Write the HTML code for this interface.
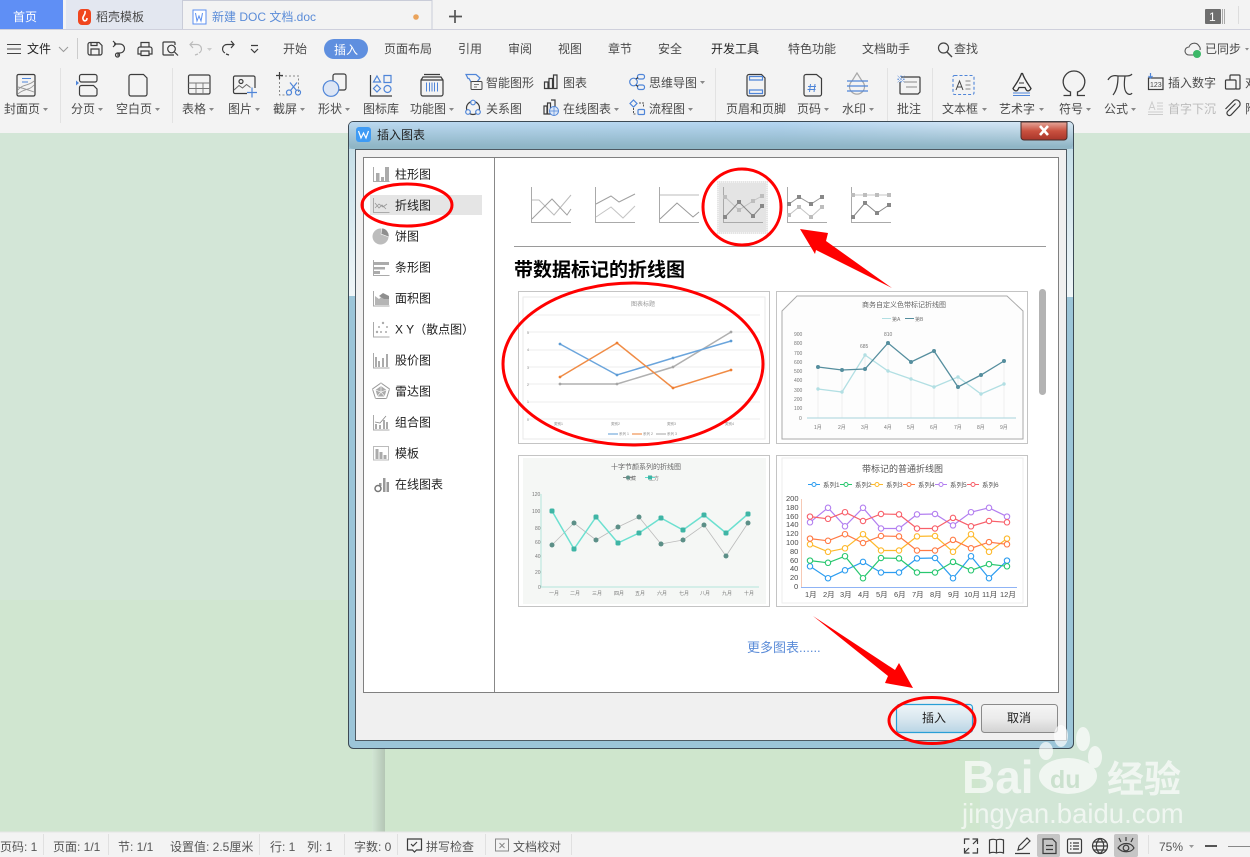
<!DOCTYPE html>
<html lang="zh-CN">
<head>
<meta charset="utf-8">
<title>插入图表</title>
<style>
html,body{margin:0;padding:0;width:1250px;height:857px;overflow:hidden;background:#f3f3f3}
svg{display:block;position:absolute;left:0;top:0}
text{font-family:"Liberation Sans","Noto Sans CJK SC",sans-serif;font-size:12px;fill:#4a4a4a}
.k{fill:#222}
.i{fill:none;stroke:#3c3c3c;stroke-width:1.2}
.b{fill:none;stroke:#4f85d8;stroke-width:1.2}
.g{fill:none;stroke:#aaa;stroke-width:1}
.c{fill:#888}
.s{fill:#555}
.t{font-size:3.5px;fill:#888}
.t2{font-size:5px;fill:#777}
.t3{font-size:6.5px;fill:#555}
</style>
</head>
<body>
<svg width="1250" height="857" viewBox="0 0 1250 857" xmlns="http://www.w3.org/2000/svg">
<defs>
<linearGradient id="tb" x1="0" y1="0" x2="1" y2="0"><stop offset="0" stop-color="#bcd9f0"/><stop offset=".6" stop-color="#b5d6f2"/><stop offset=".85" stop-color="#d0e4f6"/><stop offset="1" stop-color="#d8e8f5"/></linearGradient>
<linearGradient id="tb2" x1="0" y1="0" x2="0" y2="1"><stop offset="0" stop-color="#8db4c4" stop-opacity="0"/><stop offset=".9" stop-color="#8db4c4" stop-opacity=".95"/></linearGradient>
<linearGradient id="cl" x1="0" y1="0" x2="0" y2="1"><stop offset="0" stop-color="#e6a89c"/><stop offset=".5" stop-color="#c9513f"/><stop offset="1" stop-color="#a8352a"/></linearGradient>
<linearGradient id="ok" x1="0" y1="0" x2="0" y2="1"><stop offset="0" stop-color="#eef5f9"/><stop offset=".5" stop-color="#d9e7ef"/><stop offset="1" stop-color="#b9d5e5"/></linearGradient>
<linearGradient id="no" x1="0" y1="0" x2="0" y2="1"><stop offset="0" stop-color="#f5f5f5"/><stop offset=".5" stop-color="#ebebeb"/><stop offset="1" stop-color="#d2d2d2"/></linearGradient>
<linearGradient id="sh" x1="0" y1="0" x2="1" y2="0"><stop offset="0" stop-color="#d2e6d4"/><stop offset="1" stop-color="#b4c6b5"/></linearGradient>
<linearGradient id="fr" x1="0" y1="0" x2="0" y2="1"><stop offset="0" stop-color="#c6dfe8"/><stop offset="1" stop-color="#f0f6f8"/></linearGradient>
<marker id="m1" markerUnits="userSpaceOnUse" markerWidth="8" markerHeight="8" refX="4" refY="4"><circle cx="4" cy="4" r="2.7" fill="#fff" stroke="#2d9df0" stroke-width="1.100"/></marker>
<marker id="m2" markerUnits="userSpaceOnUse" markerWidth="8" markerHeight="8" refX="4" refY="4"><circle cx="4" cy="4" r="2.7" fill="#fff" stroke="#28c76f" stroke-width="1.100"/></marker>
<marker id="m3" markerUnits="userSpaceOnUse" markerWidth="8" markerHeight="8" refX="4" refY="4"><circle cx="4" cy="4" r="2.7" fill="#fff" stroke="#fdb92c" stroke-width="1.100"/></marker>
<marker id="m4" markerUnits="userSpaceOnUse" markerWidth="8" markerHeight="8" refX="4" refY="4"><circle cx="4" cy="4" r="2.7" fill="#fff" stroke="#ff7a45" stroke-width="1.100"/></marker>
<marker id="m5" markerUnits="userSpaceOnUse" markerWidth="8" markerHeight="8" refX="4" refY="4"><circle cx="4" cy="4" r="2.7" fill="#fff" stroke="#b37ff0" stroke-width="1.100"/></marker>
<marker id="m6" markerUnits="userSpaceOnUse" markerWidth="8" markerHeight="8" refX="4" refY="4"><circle cx="4" cy="4" r="2.7" fill="#fff" stroke="#f8606a" stroke-width="1.100"/></marker>
<marker id="d1" markerUnits="userSpaceOnUse" markerWidth="4" markerHeight="4" refX="2" refY="2"><circle cx="2" cy="2" r="1.4" fill="#5b9bd5"/></marker>
<marker id="d2" markerUnits="userSpaceOnUse" markerWidth="4" markerHeight="4" refX="2" refY="2"><circle cx="2" cy="2" r="1.4" fill="#ed7d31"/></marker>
<marker id="d3" markerUnits="userSpaceOnUse" markerWidth="4" markerHeight="4" refX="2" refY="2"><circle cx="2" cy="2" r="1.4" fill="#a5a5a5"/></marker>
<marker id="e1" markerUnits="userSpaceOnUse" markerWidth="6" markerHeight="6" refX="3" refY="3"><circle cx="3" cy="3" r="2" fill="#558e9e"/></marker>
<marker id="e2" markerUnits="userSpaceOnUse" markerWidth="6" markerHeight="6" refX="3" refY="3"><circle cx="3" cy="3" r="1.7" fill="#b2dfe3"/></marker>
<marker id="f1" markerUnits="userSpaceOnUse" markerWidth="8" markerHeight="8" refX="4" refY="4"><rect x="1.500" y="1.500" width="5" height="5" rx="1.600" fill="#3fb5a5"/></marker>
<marker id="f2" markerUnits="userSpaceOnUse" markerWidth="8" markerHeight="8" refX="4" refY="4"><circle cx="4" cy="4" r="2.5" fill="#5c8f87"/></marker>
<marker id="q1" markerUnits="userSpaceOnUse" markerWidth="6" markerHeight="6" refX="3" refY="3"><rect x="1" y="1" width="4" height="4" fill="#888"/></marker>
<marker id="q2" markerUnits="userSpaceOnUse" markerWidth="6" markerHeight="6" refX="3" refY="3"><rect x="1" y="1" width="4" height="4" fill="#bdbdbd"/></marker>
</defs>

<!-- document background -->
<rect x="0" y="133" width="1250" height="699" fill="#d3e6d7"/>
<rect x="0" y="600" width="385" height="232" fill="#d0e6d0"/>
<rect x="372" y="133" width="13" height="699" fill="url(#sh)"/>
<rect x="385" y="133" width="595" height="699" fill="#cfe6cd"/>
<rect x="980" y="133" width="270" height="699" fill="#d2e6d6"/>

<!-- top bars -->
<rect x="0" y="0" width="1250" height="133" fill="#f3f3f3"/>
<rect x="0" y="29" width="1250" height="1" fill="#cfd0dc"/>
<rect x="0" y="0" width="63" height="29" fill="#5f8ff5"/>
<rect x="66" y="0" width="116" height="29" fill="#e3e7f0"/>
<path d="M182.500 29V.5H432V29" fill="#f3f3f3" stroke="#c9ccd8"/>
<text x="13" y="21" style="fill:#fff">首页</text>
<rect x="78" y="9" width="13" height="16" rx="4" fill="#f0461f"/>
<path d="M85 11c1 4-3 5-2 8s4 2 4-1" fill="none" stroke="#fff" stroke-width="1.600"/>
<text x="96" y="21">稻壳模板</text>
<rect x="193" y="10" width="13" height="14" fill="#fff" stroke="#5b8ff0"/>
<path d="M195.500 13l1.500 8 2-5 2 5 1.500-8" fill="none" stroke="#5b8ff0"/>
<text x="212" y="21" style="fill:#5b8cd8">新建 DOC 文档.doc</text>
<circle cx="416" cy="17" r="2.800" fill="#eaa35b"/>
<path d="M455 10v13M449 16.500h13" stroke="#555" stroke-width="1.700"/>
<rect x="1205" y="9" width="16" height="15" rx="1" fill="#6e6e6e"/>
<text x="1209" y="21" style="fill:#fff">1</text>
<path d="M1222.500 9v15M1224.500 9v15" stroke="#aaa"/>
<path d="M1238.500 6v18" stroke="#ddd"/>

<!-- menu row -->
<path d="M7 44.500h14M7 49h14M7 53.500h14" stroke="#444"/>
<text x="27" y="53" class="k">文件</text>
<path d="M59 47l4.500 4.500L68 47" fill="none" stroke="#999"/>
<path d="M77.500 38v21" stroke="#ccc"/>
<path class="i" d="M90 42.500h9l3 3V53a2 2 0 0 1-2 2H90a2 2 0 0 1-2-2v-8.500a2 2 0 0 1 2-2zM91 55v-6h8v6M91 42.500v3h6v-3"/>
<path class="i" d="M114 44h6a4.500 4.500 0 0 1 0 9h-2v3M113 47l3-3-3-3"/><circle cx="117.500" cy="55" r="2" class="i"/>
<path class="i" d="M141 47v-4.500h8V47M140 47h10a2 2 0 0 1 2 2v5h-3M141 54h-3v-5a2 2 0 0 1 2-2M141 51h8v4.500h-8z"/>
<path class="i" d="M174 55h-10a1 1 0 0 1-1-1V43a1 1 0 0 1 1-1h10a1 1 0 0 1 1 1v2"/><circle cx="171.500" cy="49" r="3.800" class="i"/><path class="i" d="M174.500 52l3.500 3.500"/>
<path d="M193 48l-3-3.500 3-3M190 44.500h7a4.500 4.500 0 0 1 2 8.500M198 54l-3 1" fill="none" stroke="#bbb" stroke-width="1.200"/>
<path d="M207 48l2.500 3 2.500-3z" fill="#ccc"/>
<path class="i" d="M231 41l3 3.500-3 3.500M234 44.500h-7a4.500 4.500 0 0 0-2 8.500M226 54l3 1"/>
<path class="i" d="M251 45.500h7M251 49l3.500 3.500 3.500-3.500"/>
<text x="283" y="53">开始</text>
<rect x="324" y="39" width="44" height="20" rx="10" fill="#5f8fdf"/>
<text x="334" y="54" style="fill:#fff">插入</text>
<text x="384" y="53">页面布局</text>
<text x="458" y="53">引用</text>
<text x="508" y="53">审阅</text>
<text x="558" y="53">视图</text>
<text x="608" y="53">章节</text>
<text x="658" y="53">安全</text>
<text x="711" y="53" class="k">开发工具</text>
<text x="788" y="53">特色功能</text>
<text x="862" y="53">文档助手</text>
<circle cx="943.500" cy="48" r="5" fill="none" stroke="#444" stroke-width="1.200"/>
<path d="M947 52l5 5" stroke="#444" stroke-width="1.400"/>
<text x="954" y="53">查找</text>
<path d="M1195 55h-6a4 4 0 0 1 0-8 5.500 5.500 0 0 1 10-1 4 4 0 0 1 1 4" fill="none" stroke="#555" stroke-width="1.100"/>
<circle cx="1197" cy="54" r="4" fill="#3cb868"/>
<text x="1205" y="53">已同步</text>
<path d="M1245 48l2 2.500 2-2.500" fill="#888"/>

<!-- ribbon separators -->
<path d="M60.500 68v55M172.500 68v55M715.500 68v55M887.500 68v55M932.500 68v55" stroke="#e2e2e2"/>

<!-- ribbon labels -->
<text x="4" y="113">封面页</text><path d="M43 108l2.500 3 2.500-3z" class="c"/>
<text x="71" y="113">分页</text><path d="M98 108l2.500 3 2.500-3z" class="c"/>
<text x="116" y="113">空白页</text><path d="M155 108l2.500 3 2.500-3z" class="c"/>
<text x="182" y="113">表格</text><path d="M209 108l2.500 3 2.500-3z" class="c"/>
<text x="228" y="113">图片</text><path d="M255 108l2.500 3 2.500-3z" class="c"/>
<text x="273" y="113">截屏</text><path d="M300 108l2.500 3 2.500-3z" class="c"/>
<text x="318" y="113">形状</text><path d="M345 108l2.500 3 2.500-3z" class="c"/>
<text x="363" y="113">图标库</text>
<text x="410" y="113">功能图</text><path d="M449 108l2.500 3 2.500-3z" class="c"/>
<text x="486" y="87">智能图形</text>
<text x="486" y="113">关系图</text>
<text x="563" y="87">图表</text>
<text x="563" y="113">在线图表</text><path d="M614 108l2.500 3 2.500-3z" class="c"/>
<text x="649" y="87">思维导图</text><path d="M700 81l2.500 3 2.500-3z" class="c"/>
<text x="649" y="113">流程图</text><path d="M688 108l2.500 3 2.500-3z" class="c"/>
<text x="726" y="113">页眉和页脚</text>
<text x="797" y="113">页码</text><path d="M824 108l2.500 3 2.500-3z" class="c"/>
<text x="842" y="113">水印</text><path d="M869 108l2.500 3 2.500-3z" class="c"/>
<text x="897" y="113">批注</text>
<text x="942" y="113">文本框</text><path d="M982 108l2.500 3 2.500-3z" class="c"/>
<text x="999" y="113">艺术字</text><path d="M1039 108l2.500 3 2.500-3z" class="c"/>
<text x="1059" y="113">符号</text><path d="M1086 108l2.500 3 2.500-3z" class="c"/>
<text x="1104" y="113">公式</text><path d="M1131 108l2.500 3 2.500-3z" class="c"/>
<text x="1168" y="87">插入数字</text>
<text x="1168" y="113" style="fill:#bbb">首字下沉</text>
<text x="1245" y="87">对象</text>
<text x="1245" y="113">附件</text>

<!-- ribbon icons -->
<rect x="17" y="74.500" width="18" height="21.500" rx="1.500" class="i"/><path d="M22 78.500h9M22 82h6" stroke="#4f85d8" stroke-width="1.100"/><path d="M18 90c4-6 11-4 16-9M18 94c6-6 11-3 16-9M18 87c5 1 10 3 16 5" fill="none" stroke="#999" stroke-width=".9"/>
<rect x="79.500" y="74.500" width="17.500" height="7.500" rx="2" class="i"/><path class="i" d="M81.500 85.500h12l3.500 3.500v5a2 2 0 0 1-2 2H81.500a2 2 0 0 1-2-2v-6.500a2 2 0 0 1 2-2z"/><path d="M76 80.500l3 2.500-3 2.500z" fill="#4f85d8"/>
<path class="i" d="M131 74.500h12.500l3.500 3.500v16a2 2 0 0 1-2 2h-14a2 2 0 0 1-2-2V76.500a2 2 0 0 1 2-2z"/>
<rect x="188.500" y="75" width="21.500" height="19" rx="1.500" class="i"/><path d="M188.500 83h21.500M188.500 88.500h21.500M196 83v11M203 83v11" stroke="#777" stroke-width=".9"/>
<rect x="233.500" y="76" width="21.500" height="17.500" rx="1.500" class="i"/><circle cx="241" cy="81.500" r="2" class="i"/><path d="M234 90l5-4.500 3.500 2.500 4-3.500 4 3" fill="none" stroke="#666" stroke-width="1"/><rect x="247" y="88" width="10" height="9" fill="#f3f3f3"/><path class="b" d="M252 87.500v10M247 92.500h10"/>
<path d="M281 76h17.500v16M279.500 78v17h9" fill="none" stroke="#888" stroke-dasharray="2 2"/><path class="i" d="M276 75.500h7M279.500 72v7"/><circle cx="289" cy="92.500" r="2.500" class="b"/><circle cx="298" cy="92.500" r="2.500" class="b"/><path class="b" d="M290.500 90.500l6.500-8M296.500 90.500l-6.500-8"/>
<path class="i" d="M333 88V76a2 2 0 0 1 2-2h9a2 2 0 0 1 2 2v12a2 2 0 0 1-2 2h-5"/><circle cx="331" cy="88.500" r="7.800" fill="#dde6f5" stroke="#4f85d8" stroke-width="1.200"/>
<path class="i" d="M370.500 75v21h21.500"/><path class="b" d="M377 76l3.500 6h-7zM384 75.500h7v7h-7zM377 85l3.500 3.500-3.500 3.500-3.500-3.500z"/><circle cx="387.500" cy="89" r="3.500" class="b"/>
<path class="i" d="M421 94V80l2-3h18l2 3v14a2 2 0 0 1-2 2h-18a2 2 0 0 1-2-2zM421 80h22M424 74.500h16"/><path d="M426.500 82.500v9M429.500 82.500v9M432 82.500v9M434.500 82.500v9M437.500 82.500v9" stroke="#4f85d8"/>
<path class="b" d="M466 74.500h10l4 3.500-3 4h-6l-2-3.500h-1z"/><rect x="471" y="81.500" width="11" height="8" rx="1" fill="#f3f3f3" stroke="#444"/><path d="M474 84.500h5M474 87h3" stroke="#777"/>
<circle cx="473" cy="108" r="6.500" class="i"/><circle cx="473" cy="102.500" r="2.300" fill="#f3f3f3" stroke="#4f85d8" stroke-width="1.200"/><circle cx="468" cy="112" r="2.300" fill="#f3f3f3" stroke="#4f85d8" stroke-width="1.200"/><circle cx="478" cy="112" r="2.300" fill="#f3f3f3" stroke="#4f85d8" stroke-width="1.200"/>
<path class="i" d="M544.500 82h3.500v6.500h-3.500zM549 78.500h3.500v10H549zM553.500 75h3.500v13.500h-3.500z"/>
<path class="i" d="M544 106h3v8h-3zM547.500 103h3v11h-3zM551 100h4v9"/><circle cx="554" cy="111" r="4.500" fill="#dbe6f7" stroke="#4f85d8"/><path d="M549.500 111h9M554 106.500v9" stroke="#4f85d8" stroke-width=".7"/>
<circle cx="633.500" cy="82" r="3.800" class="b"/><rect x="637.500" y="74.500" width="7" height="4.500" rx="2" class="b"/><rect x="637.500" y="85" width="7" height="4.500" rx="2" class="b"/><path class="i" d="M636 79l2-1.500M636 85l2 1.500" stroke-width="1"/>
<path class="b" d="M633.500 100l3.500 3.500-3.500 3.500-3.500-3.500z"/><rect x="638" y="109.500" width="6.500" height="5" rx="1" class="b"/><path d="M639 103h4.500v4.500M633.500 108v6h3" fill="none" stroke="#555" stroke-dasharray="2 1"/>
<path class="i" d="M749 74.500h12.500l3.500 3.500v16a2 2 0 0 1-2 2h-14a2 2 0 0 1-2-2V76.500a2 2 0 0 1 2-2z"/><path class="b" d="M749.500 76.500h13v3.500h-13zM749.500 90h13v3.500h-13z"/>
<path class="i" d="M806 74.500h10.500l5 4v15.500a2 2 0 0 1-2 2H806a2 2 0 0 1-2-2V76.500a2 2 0 0 1 2-2z"/><path d="M810.500 84l-1 8M815 84l-1 8M808 86.500h8M807.500 89.500h8" stroke="#4f85d8" fill="none"/>
<path d="M857 73l-5 8a7.500 7.500 0 1 0 10 0z" fill="none" stroke="#a8a8a8" stroke-width="1.200"/><path d="M847 81h21M847 86h21M847 91h21" stroke="#4f85d8" stroke-width="1.200"/>
<path class="i" d="M901 77h18a1 1 0 0 1 1 1v14l-2 2h-17a1 1 0 0 1-1-1V82"/><path d="M904 82h13M906 87h11" stroke="#888"/><text x="896" y="83" style="fill:#4f85d8;font-size:10px">※</text>
<rect x="953" y="75.500" width="21" height="19" rx="1.500" fill="none" stroke="#4f85d8" stroke-dasharray="3 2" stroke-width="1.100"/><path d="M956 90l3.500-9 3.500 9M957.500 87h4" fill="none" stroke="#444"/><path d="M965.500 81h5M965.500 85h5M965.500 89h5" stroke="#888"/>
<path d="M1021.500 73.500c-2 6-6 11-8.500 15 1.500 3 4 3 5 1l1-2h6l1 2c1 2 3.500 2 5-1-2.500-4-6.500-9-8.500-15z" fill="none" stroke="#333" stroke-width="1.300"/><path d="M1019 83h5" stroke="#333"/><path d="M1013 93h17M1013 95.500h17" stroke="#4f85d8"/>
<path d="M1063.500 95.500h7v-3.500a10.800 10.800 0 1 1 7 0v3.500h7.500" fill="none" stroke="#3c3c3c" stroke-width="1.300"/>
<path d="M1108 80c2-4 6-5 10-4h8c3 0 5-.5 6-2M1118 76c0 8-1 14-5 19M1125 76c-1 7-1 13 1 16 2 3 5 3 6 1" fill="none" stroke="#3c3c3c" stroke-width="1.200"/>
<rect x="1148.500" y="78" width="14.500" height="11.500" class="i" stroke-width="1"/><text x="1150" y="87" style="font-size:7px">123</text><path class="b" d="M1150.500 73v5M1148.500 76l2 2 2-2" stroke-width="1"/>
<path d="M1149 110l3-8 3 8M1150 107.500h4M1157 103h6M1157 106h6M1157 109h6M1148 112h15M1148 114.500h15" fill="none" stroke="#ccc"/>
<path class="i" d="M1230 80v-4a1 1 0 0 1 1-1h8a1 1 0 0 1 1 1v12a1 1 0 0 1-1 1h-3"/><rect x="1225.500" y="80" width="10.500" height="9" rx="1" class="i"/>
<path class="i" d="M1235 105l-8 8a2.500 2.500 0 0 0 3.500 3.500l8.500-9a4 4 0 0 0-5.500-5.500l-8.500 8.500" transform="translate(.5 -1.500)"/>

<!-- dialog -->
<rect x="348.500" y="121.500" width="725" height="627" rx="5" fill="#9cc5d8" stroke="#3c4a55"/>
<rect x="349" y="149" width="6.500" height="147" fill="url(#fr)"/>
<rect x="1067" y="149" width="6" height="148" fill="url(#fr)"/>
<rect x="349" y="122" width="724" height="27" rx="4" fill="url(#tb)"/>
<rect x="349" y="122" width="724" height="27" rx="4" fill="url(#tb2)"/>
<rect x="355.500" y="149.500" width="711" height="591" fill="#f0f0f0" stroke="#4e5a63"/>
<rect x="356" y="127" width="15" height="15" rx="3" fill="#3e9bf5"/>
<path d="M358.500 131l2.500 7 2.500-5 2.500 5 2.500-7" fill="none" stroke="#fff" stroke-width="1.200"/>
<text x="377" y="139" class="k">插入图表</text>
<path d="M1021 122h46v15a3 3 0 0 1-3 3h-40a3 3 0 0 1-3-3z" fill="url(#cl)" stroke="#4a2f2c"/>
<path d="M1040 126l8 9M1048 126l-8 9" stroke="#fff" stroke-width="2.600"/>

<rect x="363.500" y="157.500" width="695" height="535" fill="#fff" stroke="#808080"/>
<path d="M494.500 158v534" stroke="#888"/>
<rect x="370" y="195" width="112" height="20" fill="#e5e5e5"/>

<!-- side icons & text -->
<text x="395" y="178.500" class="k">柱形图</text>
<text x="395" y="209.500" class="k">折线图</text>
<text x="395" y="240.500" class="k">饼图</text>
<text x="395" y="271.500" class="k">条形图</text>
<text x="395" y="302.500" class="k">面积图</text>
<text x="395" y="333.500" class="k">X Y（散点图）</text>
<text x="395" y="364.500" class="k">股价图</text>
<text x="395" y="395.500" class="k">雷达图</text>
<text x="395" y="426.500" class="k">组合图</text>
<text x="395" y="457.500" class="k">模板</text>
<text x="395" y="488.500" class="k">在线图表</text>
<g fill="#ababab">
<path d="M373.500 167v14.500h16" class="g"/><path d="M376 173h3.500v8H376zM381 177h3v4h-3zM385 167h4v14h-4z"/>
<path d="M373.500 198v14.500h16" class="g"/><path d="M375 203l4 5 3-3 4 4M375 208l4-4 4 3 4-3" fill="none" stroke="#999" stroke-width=".8"/>
<circle cx="380.500" cy="236.500" r="8" fill="#bcbcbc"/><path d="M382 228a8 8 0 0 1 7 9l-8-3z" fill="#8f8f8f" stroke="#fff" stroke-width=".6"/>
<path d="M373.500 260v15.500h16" class="g"/><path d="M374 262h15v3h-15zM374 267h11v2.500h-11zM374 271h6v3h-6z"/>
<path d="M373.500 291v15h16" class="g"/><path d="M375 305v-9l4 3 4-4 6 3v7z" fill="#b5b5b5"/><path d="M379 296l4-3 6 3v3h-5z" fill="#8f8f8f"/>
<path d="M373.500 322v15h16" class="g"/><circle cx="377" cy="332" r="1.200"/><circle cx="383" cy="323" r="1.200"/><circle cx="379" cy="327" r="1"/><circle cx="387" cy="327" r="1"/><circle cx="381" cy="332" r="1"/><circle cx="386" cy="332" r="1"/>
<path d="M373.500 353v15h16" class="g"/><path d="M375 357h2v10h-2zM378 361h2v6h-2zM382 358h2v9h-2zM386 354h2v13h-2z"/>
<path d="M381 383l8.500 6-3 9.500h-11l-3-9.500z" fill="none" stroke="#999"/><path d="M381 386l5.500 4-2 6.500h-7l-2-6.500z"/><path d="M381 383v9M372.500 389l8.500 3 8.500-3M375.500 398.500l5.500-6.500 5.500 6.500" stroke="#fff" stroke-width=".6" fill="none"/>
<path d="M373.500 415v15h16" class="g"/><path d="M375 424h2v5h-2zM379 425h2v4h-2zM383 420h2v9h-2zM386 422h2v7h-2z"/><path d="M375 422l5 1 6-7" fill="none" stroke="#888" stroke-width=".8"/>
<rect x="373.500" y="446.500" width="15" height="13.500" fill="none" stroke="#bbb"/><path d="M375.500 449h3v10h-3zM379.500 452h3v7h-3zM383.500 455h3v4h-3z"/>
</g>
<path d="M379 486v-3h2.500v3zM383 478h2.500v14H383zM386.500 482h2.500v10h-2.500z" fill="#999"/><circle cx="378" cy="488.500" r="3" fill="none" stroke="#777" stroke-width="1.500"/>

<!-- thumbnails -->
<rect x="717" y="181" width="51" height="53" fill="#e4e4e4"/>
<rect x="718" y="182" width="49" height="51" fill="none" stroke="#fff" stroke-dasharray="1 1"/>
<g fill="none" stroke-width="1">
<path d="M531.500 187v35.500H571M595.500 187v35.500H635M659.500 187v35.500H699M723.500 187v35.500H763M787.500 187v35.500H827M851.500 187v35.500H891" stroke="#aaa"/>
<path d="M532 200h7l15 15 17-20" stroke="#bbb"/><path d="M532 219l20-20 15 16 4-6" stroke="#a0a0a0"/>
<path d="M596 204l15-8 8 6 16-8" stroke="#a0a0a0"/><path d="M596 217l15-10 12 11 12-12" stroke="#c4c4c4"/>
<path d="M660 195h39" stroke="#bbb"/><path d="M660 219l17-16 16 14 6-5" stroke="#999"/>
<polyline points="725,197 739,210 753,201 762,196" stroke="#c2c2c2" marker-start="url(#q2)" marker-mid="url(#q2)" marker-end="url(#q2)"/>
<polyline points="725,217 739,202 753,216 762,206" stroke="#888" marker-start="url(#q1)" marker-mid="url(#q1)" marker-end="url(#q1)"/>
<polyline points="789,204 799,197 811,204 822,197" stroke="#999" marker-start="url(#q1)" marker-mid="url(#q1)" marker-end="url(#q1)"/>
<polyline points="789,215 799,207 811,217 822,207" stroke="#c4c4c4" marker-start="url(#q2)" marker-mid="url(#q2)" marker-end="url(#q2)"/>
<polyline points="853,195 865,195 877,195 889,195" stroke="#c4c4c4" marker-start="url(#q2)" marker-mid="url(#q2)" marker-end="url(#q2)"/>
<polyline points="853,217 865,203 877,213 889,205" stroke="#888" marker-start="url(#q1)" marker-mid="url(#q1)" marker-end="url(#q1)"/>
</g>
<path d="M514 246.500h532" stroke="#9a9a9a"/>
<text x="514" y="276" style="font-size:19px;font-weight:bold;fill:#000">带数据标记的折线图</text>
<rect x="1039" y="289" width="7" height="106" rx="3.500" fill="#b3b3b3"/>

<!-- chart 1 -->
<rect x="518.500" y="291.500" width="251" height="152" fill="#fff" stroke="#c4c4c4"/>
<rect x="523" y="297" width="242" height="142" fill="#fff" stroke="#eaeaea"/>
<path d="M527 315h233M527 332h233M527 350h233M527 367h233M527 384h233M527 402h233M527 419h233" stroke="#ececec"/>
<text x="631" y="306" style="font-size:6px;fill:#999">图表标题</text>
<g class="t"><text x="527" y="334" class="t">5</text><text x="527" y="351" class="t">4</text><text x="527" y="369" class="t">3</text><text x="527" y="386" class="t">2</text><text x="527" y="403" class="t">1</text><text x="527" y="421" class="t">0</text>
<text x="554" y="425" class="t">类别1</text><text x="611" y="425" class="t">类别2</text><text x="667" y="425" class="t">类别3</text><text x="725" y="425" class="t">类别4</text>
<text x="619" y="435" class="t">系列 1</text><text x="643" y="435" class="t">系列 2</text><text x="667" y="435" class="t">系列 3</text></g>
<path d="M608 434h10" stroke="#5b9bd5"/><path d="M632 434h10" stroke="#ed7d31"/><path d="M656 434h10" stroke="#a5a5a5"/>
<g fill="none" stroke-width="1.500">
<polyline points="560,384 617,384 673,367 731,332" stroke="#b0b0b0" marker-start="url(#d3)" marker-mid="url(#d3)" marker-end="url(#d3)"/>
<polyline points="560,344 617,375 673,358 731,341" stroke="#6ba5dc" marker-start="url(#d1)" marker-mid="url(#d1)" marker-end="url(#d1)"/>
<polyline points="560,377 617,343 673,388 731,370" stroke="#f08c46" marker-start="url(#d2)" marker-mid="url(#d2)" marker-end="url(#d2)"/>
</g>

<!-- chart 2 -->
<rect x="776.500" y="291.500" width="251" height="152" fill="#fff" stroke="#c4c4c4"/>
<path d="M782 311l15-15h210l16 15v128H782z" fill="#fdfdfd" stroke="#aaa"/>
<text x="862" y="307" style="font-size:7px;fill:#666">商务自定义色带标记折线图</text>
<path d="M882 318.500h9" stroke="#b2dfe3"/><text x="892" y="321" class="t2">第A</text><path d="M905 318.500h9" stroke="#558e9e"/><text x="915" y="321" class="t2">第B</text>
<g class="t2">
<text x="794" y="336" class="t2">900</text><text x="794" y="345" class="t2">800</text><text x="794" y="355" class="t2">700</text><text x="794" y="364" class="t2">600</text><text x="794" y="373" class="t2">500</text><text x="794" y="382" class="t2">400</text><text x="794" y="392" class="t2">300</text><text x="794" y="401" class="t2">200</text><text x="794" y="410" class="t2">100</text><text x="799" y="420" class="t2">0</text>
<text x="814" y="429" class="t2">1月</text><text x="838" y="429" class="t2">2月</text><text x="861" y="429" class="t2">3月</text><text x="884" y="429" class="t2">4月</text><text x="907" y="429" class="t2">5月</text><text x="930" y="429" class="t2">6月</text><text x="954" y="429" class="t2">7月</text><text x="977" y="429" class="t2">8月</text><text x="1000" y="429" class="t2">9月</text>
<text x="860" y="348" class="t2">685</text><text x="884" y="336" class="t2">810</text>
</g>
<path d="M818 367v51M842 370v48M865 355v63M888 343v75M911 362v56M934 351v67M958 377v41M981 375v43M1004 361v57" stroke="#eee"/>
<path d="M807 418h209" stroke="#b8dbe3" stroke-width="1.200"/>
<g fill="none" stroke-width="1.300">
<polyline points="818,389 842,392 865,355 888,371 911,379 934,387 958,377 981,394 1004,384" stroke="#b2dfe3" marker-start="url(#e2)" marker-mid="url(#e2)" marker-end="url(#e2)"/>
<polyline points="818,367 842,370 865,369 888,343 911,362 934,351 958,387 981,375 1004,361" stroke="#558e9e" marker-start="url(#e1)" marker-mid="url(#e1)" marker-end="url(#e1)"/>
</g>

<!-- chart 3 -->
<rect x="518.500" y="455.500" width="251" height="151" fill="#fff" stroke="#c4c4c4"/>
<rect x="523" y="458" width="243" height="146" fill="#f5f7f5"/>
<text x="611" y="469" style="font-size:7px;fill:#666">十字节颜系列的折线图</text>
<g class="t2">
<text x="626" y="480" class="t2">收藏</text><text x="649" y="480" class="t2">王方</text>
<text x="532" y="496" class="t2">120</text><text x="532" y="513" class="t2">100</text><text x="535" y="530" class="t2">80</text><text x="535" y="544" class="t2">60</text><text x="535" y="558" class="t2">40</text><text x="535" y="574" class="t2">20</text><text x="538" y="589" class="t2">0</text>
<text x="549" y="595" class="t2">一月</text><text x="570" y="595" class="t2">二月</text><text x="592" y="595" class="t2">三月</text><text x="614" y="595" class="t2">四月</text><text x="635" y="595" class="t2">五月</text><text x="657" y="595" class="t2">六月</text><text x="679" y="595" class="t2">七月</text><text x="700" y="595" class="t2">八月</text><text x="722" y="595" class="t2">九月</text><text x="744" y="595" class="t2">十月</text>
</g>
<path d="M541 494v93h218" fill="none" stroke="#b4e6dc"/>
<path d="M623 477.500h10" stroke="#888"/><circle cx="628" cy="477.500" r="2" fill="#5c8f87"/><path d="M645 477.500h10" stroke="#5fdccb"/><rect x="648" y="475.500" width="4" height="4" fill="#3fb5a5"/>
<g fill="none">
<polyline points="552,545 574,523 596,540 618,527 639,517 661,544 683,540 704,525 726,556 748,523" stroke="#bbb" stroke-width=".8" marker-start="url(#f2)" marker-mid="url(#f2)" marker-end="url(#f2)"/>
<polyline points="552,511 574,549 596,517 618,543 639,533 661,518 683,530 704,515 726,533 748,514" stroke="#6ce0d0" stroke-width="1.500" marker-start="url(#f1)" marker-mid="url(#f1)" marker-end="url(#f1)"/>
</g>

<!-- chart 4 -->
<rect x="776.500" y="455.500" width="251" height="151" fill="#fff" stroke="#c4c4c4"/>
<rect x="782" y="458" width="241" height="145" fill="#fff" stroke="#eee"/>
<text x="862" y="472" style="font-size:9px;fill:#555">带标记的普通折线图</text>
<g class="t3">
<path d="M808 484.500h12" stroke="#2d9df0"/><circle cx="814" cy="484.500" r="2" fill="#fff" stroke="#2d9df0"/><text x="823" y="487" class="t3">系列1</text>
<path d="M840 484.500h12" stroke="#28c76f"/><circle cx="846" cy="484.500" r="2" fill="#fff" stroke="#28c76f"/><text x="855" y="487" class="t3">系列2</text>
<path d="M871 484.500h12" stroke="#fdb92c"/><circle cx="877" cy="484.500" r="2" fill="#fff" stroke="#fdb92c"/><text x="886" y="487" class="t3">系列3</text>
<path d="M903 484.500h12" stroke="#ff7a45"/><circle cx="909" cy="484.500" r="2" fill="#fff" stroke="#ff7a45"/><text x="918" y="487" class="t3">系列4</text>
<path d="M935 484.500h12" stroke="#b37ff0"/><circle cx="941" cy="484.500" r="2" fill="#fff" stroke="#b37ff0"/><text x="950" y="487" class="t3">系列5</text>
<path d="M967 484.500h12" stroke="#f8606a"/><circle cx="973" cy="484.500" r="2" fill="#fff" stroke="#f8606a"/><text x="982" y="487" class="t3">系列6</text>
</g>
<g style="font-size:7.500px">
<text x="786" y="501" style="font-size:7.500px">200</text><text x="786" y="510" style="font-size:7.500px">180</text><text x="786" y="519" style="font-size:7.500px">160</text><text x="786" y="527" style="font-size:7.500px">140</text><text x="786" y="536" style="font-size:7.500px">120</text><text x="786" y="545" style="font-size:7.500px">100</text><text x="790" y="554" style="font-size:7.500px">80</text><text x="790" y="563" style="font-size:7.500px">60</text><text x="790" y="571" style="font-size:7.500px">40</text><text x="790" y="580" style="font-size:7.500px">20</text><text x="794" y="589" style="font-size:7.500px">0</text>
<text x="805" y="597" style="font-size:7.500px">1月</text><text x="823" y="597" style="font-size:7.500px">2月</text><text x="840" y="597" style="font-size:7.500px">3月</text><text x="858" y="597" style="font-size:7.500px">4月</text><text x="876" y="597" style="font-size:7.500px">5月</text><text x="894" y="597" style="font-size:7.500px">6月</text><text x="912" y="597" style="font-size:7.500px">7月</text><text x="930" y="597" style="font-size:7.500px">8月</text><text x="948" y="597" style="font-size:7.500px">9月</text><text x="964" y="597" style="font-size:7.500px">10月</text><text x="982" y="597" style="font-size:7.500px">11月</text><text x="1000" y="597" style="font-size:7.500px">12月</text>
</g>
<path d="M801.500 499v88" stroke="#f6c9b5"/>
<path d="M801 587.500h216" stroke="#8fb3f5"/>
<g fill="none" stroke-width="1.200">
<polyline stroke="#2d9df0" marker-start="url(#m1)" marker-mid="url(#m1)" marker-end="url(#m1)" points="810,566.300 828,578.200 845,570.300 863,561.900 881,572.500 899,572.500 917,558.400 935,558 953,578.200 971,556.200 989,578.200 1007,560.600"/>
<polyline stroke="#28c76f" marker-start="url(#m2)" marker-mid="url(#m2)" marker-end="url(#m2)" points="810,560.600 828,562.800 845,556.200 863,578.200 881,558 899,558.400 917,572.500 935,572.500 953,561.900 971,570.300 989,564.100 1007,566.300"/>
<polyline stroke="#fdb92c" marker-start="url(#m3)" marker-mid="url(#m3)" marker-end="url(#m3)" points="810,544.300 828,551.800 845,548.300 863,534.200 881,550.500 899,550.500 917,536.400 935,536 953,551.800 971,534.200 989,551.800 1007,538.600"/>
<polyline stroke="#ff7a45" marker-start="url(#m4)" marker-mid="url(#m4)" marker-end="url(#m4)" points="810,538.600 828,540.800 845,534.200 863,543 881,536 899,536.400 917,550.500 935,550.500 953,539.900 971,548.300 989,542.100 1007,544.300"/>
<polyline stroke="#b37ff0" marker-start="url(#m5)" marker-mid="url(#m5)" marker-end="url(#m5)" points="810,522.300 828,507.800 845,526.300 863,507.800 881,528.500 899,528.500 917,514.400 935,514 953,525.400 971,512.200 989,507.800 1007,516.600"/>
<polyline stroke="#f8606a" marker-start="url(#m6)" marker-mid="url(#m6)" marker-end="url(#m6)" points="810,516.600 828,518.800 845,512.200 863,521 881,514 899,514.400 917,528.500 935,528.500 953,517.900 971,526.300 989,521 1007,522.300"/>
</g>

<text x="747" y="652" style="font-size:13px;fill:#5b8cd8">更多图表......</text>

<!-- buttons -->
<rect x="896.500" y="704.500" width="76" height="28" rx="3" fill="url(#ok)" stroke="#2a9fd6" stroke-width="1.200"/>
<text x="922" y="722" class="k">插入</text>
<rect x="981.500" y="704.500" width="76" height="28" rx="3" fill="url(#no)" stroke="#8a8a8a"/>
<text x="1007" y="722" class="k">取消</text>

<!-- red annotations -->
<g fill="none" stroke="#f00" stroke-width="3">
<ellipse cx="742" cy="207" rx="39" ry="38"/>
<ellipse cx="407" cy="205" rx="45" ry="21"/>
<ellipse cx="633" cy="364" rx="130" ry="81"/>
<ellipse cx="932" cy="720.500" rx="43" ry="23"/>
</g>
<polygon points="800,229 828,233 826,241 892,288 816,250 815,254" fill="#f00"/>
<polygon points="813,616 895,670 899,663 913,688 885,683 888,676" fill="#f00"/>

<!-- status bar -->
<rect x="0" y="832" width="1250" height="25" fill="#f3f3f3"/>
<path d="M0 832h1250" stroke="#e6e6e6"/>
<g class="s">
<text x="0" y="851" class="s">页码: 1</text>
<text x="53" y="851" class="s">页面: 1/1</text>
<text x="118" y="851" class="s">节: 1/1</text>
<text x="170" y="851" class="s">设置值: 2.5厘米</text>
<text x="270" y="851" class="s">行: 1</text>
<text x="307" y="851" class="s">列: 1</text>
<text x="354" y="851" class="s">字数: 0</text>
<text x="426" y="851" class="s">拼写检查</text>
<text x="513" y="851" class="s">文档校对</text>
<text x="1159" y="851" class="s">75%</text>
</g>
<path d="M43.500 834v21M108.500 834v21M259.500 834v21M344.500 834v21M397.500 834v21M485.500 834v21M571.500 834v21" stroke="#e0e0e0"/>
<path class="i" d="M407.500 839h14v11h-5l-2 2-2-2h-5zM411 844l2 2 4-4"/>
<path d="M495.500 839h13v12h-13zM499.500 843l5 5M504.500 843l-5 5" fill="none" stroke="#888"/>
<rect x="1037" y="834" width="23" height="23" rx="2" fill="#c5c5c5"/>
<rect x="1114" y="834" width="24" height="23" rx="2" fill="#c5c5c5"/>
<path class="i" d="M964.500 844v-5h5M977.500 844v-5h-5M964.500 848v5h5M977.500 848v5h-5M965 852l4-4M977 840l-4 4"/>
<path class="i" d="M989.500 840c3-1 5-1 7 0 2-1 4-1 7 0v13c-3-1-5-1-7 0-2-1-4-1-7 0zM996.500 840v13"/>
<path class="i" d="M1018 850l1-4 8-8 3 3-8 8zM1015 853.500h15"/>
<path class="i" d="M1043 839h9.500l3.500 3.500v11h-13zM1046 845.500h7M1046 849.500h7"/>
<rect x="1067.500" y="839" width="14" height="14" rx="1.500" class="i"/><path class="i" d="M1070 843h1.500M1073 843h6M1070 846h1.500M1073 846h6M1070 849h1.500M1073 849h6"/>
<circle cx="1100" cy="846" r="7.500" class="i"/><path class="i" d="M1092.500 846h15M1100 838.500c-5 4-5 11 0 15M1100 838.500c5 4 5 11 0 15M1094 842h12M1094 850h12"/>
<path class="i" d="M1118 848c4-6 13-6 16 0-3 5-12 5-16 0z"/><circle cx="1126" cy="848" r="2.800" class="i"/><path class="i" d="M1126 837v4M1119 838l2 4M1133 838l-2 4"/>
<path d="M1148.500 835v19" stroke="#e0e0e0"/>
<path d="M1189 845l2.500 3 2.500-3z" fill="#999"/>
<path d="M1205 846h12" stroke="#555" stroke-width="2"/>
<path d="M1228 846.500h22" stroke="#888"/>

<!-- Baidu watermark -->
<g opacity=".68">
<text x="962" y="793" style="font-size:46px;font-weight:bold;fill:#fff">Bai</text>
<ellipse cx="1068" cy="776" rx="29" ry="18" fill="#fff"/>
<ellipse cx="1046" cy="751" rx="7" ry="9" fill="#fff"/>
<ellipse cx="1061" cy="736" rx="7" ry="11" fill="#fff"/>
<ellipse cx="1083" cy="739" rx="7" ry="12" fill="#fff"/>
<ellipse cx="1095" cy="757" rx="7" ry="11" fill="#fff"/>
<text x="1050" y="788" style="font-size:25px;font-weight:bold;fill:#c9dfcb">du</text>
<text x="1107" y="792" style="font-size:37px;font-weight:bold;fill:#fff">经验</text>
<text x="962" y="823" style="font-size:27.500px;fill:#fff">jingyan.baidu.com</text>
</g>
</svg>
</body>
</html>
